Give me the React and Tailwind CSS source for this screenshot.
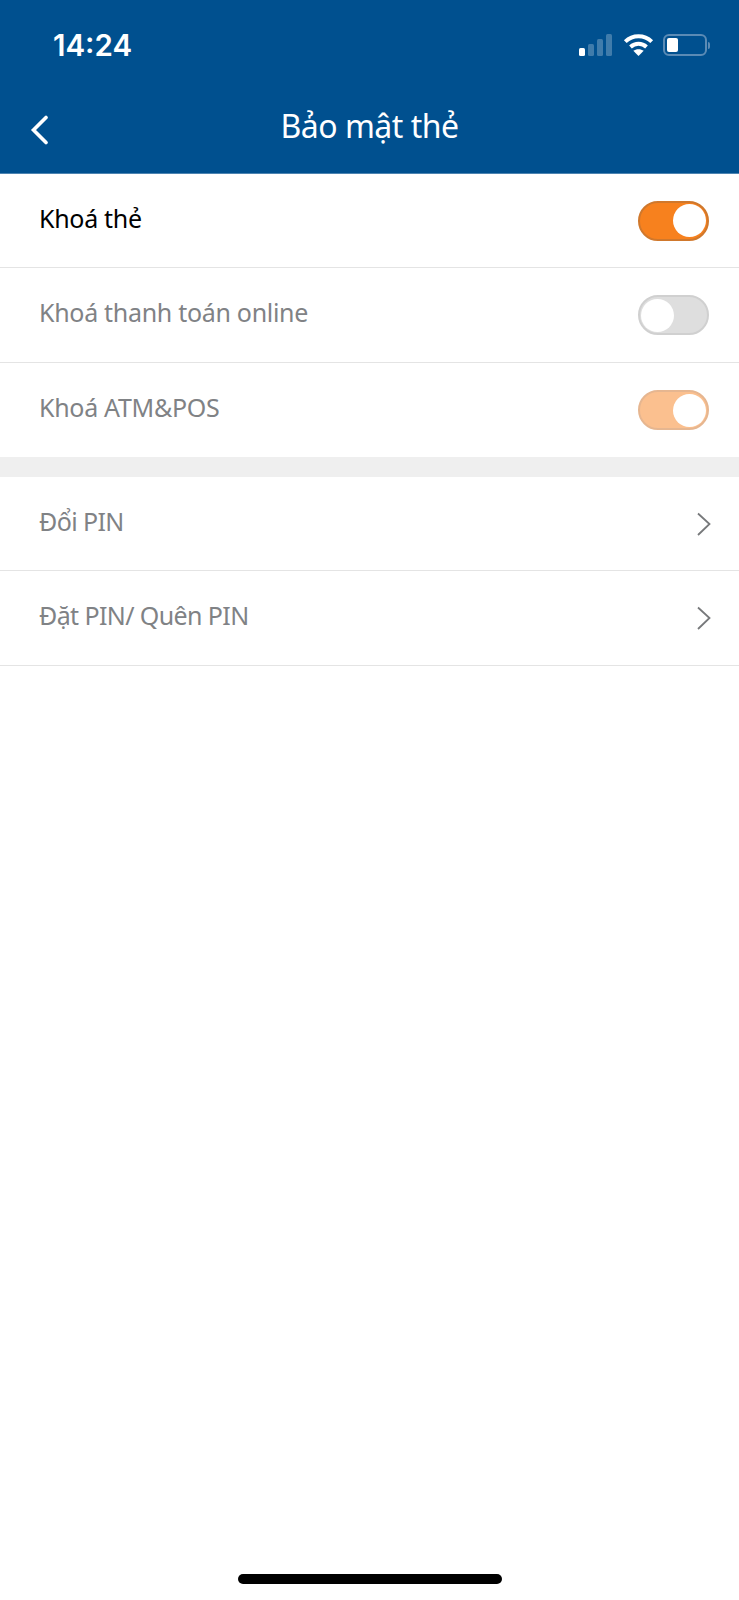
const FONT = "font-['Noto_Sans',sans-serif]";

function SignalIcon() {
  return (
    <svg width="35" height="22" viewBox="0 0 35 22" fill="white">
      <rect x="0" y="14" width="6" height="8" rx="1.5" />
      <rect x="9" y="10" width="6" height="12" rx="1.5" opacity="0.25" />
      <rect x="18" y="5" width="6" height="17" rx="1.5" opacity="0.25" />
      <rect x="27" y="0" width="6" height="22" rx="1.5" opacity="0.25" />
    </svg>
  );
}

function WifiIcon() {
  return (
    <svg width="31" height="22" viewBox="0 0 30 22" fill="none" stroke="white" strokeWidth="4">
      <path d="M1.8 7.6C9.2 0.6 20.8 0.6 28.2 7.6" />
      <path d="M7 13C11.6 8.8 18.4 8.8 23 13" />
      <path d="M15 22L9.8 16.8C12.6 14.6 17.4 14.6 20.2 16.8Z" fill="white" stroke="none" />
    </svg>
  );
}

function BatteryIcon() {
  return (
    <div className="flex items-center">
      <div className="w-[44px] h-[22px] rounded-[6px] border-2 border-[#5b8bb5] p-[2px] flex">
        <div className="w-[11px] h-full rounded-[2px] bg-white" />
      </div>
      <div className="w-[2px] h-[7px] ml-[1px] rounded-r-sm bg-[#5b8bb5]" />
    </div>
  );
}

function Toggle({ on, dim }) {
  let track = "bg-[#dedede] border-[#d0d0d0]";
  if (on) track = dim ? "bg-[#fbc08f] border-[#e6b690]" : "bg-[#f7811e] border-[#d0782c]";
  return (
    <div className={`w-[71px] h-[40px] rounded-full border-2 flex items-center px-[1px] ${track} ${on ? "justify-end" : "justify-start"}`}>
      <div className="w-[33px] h-[33px] rounded-full bg-white" />
    </div>
  );
}

function Chevron() {
  return (
    <svg width="16" height="24" viewBox="0 0 16 24" fill="none" stroke="#77797b" strokeWidth="1.8">
      <path d="M2 1.5L13.5 12L2 23" />
    </svg>
  );
}

function Row({ label, dark, short, tight, border = true, children }) {
  return (
    <div className={`${short ? "h-[94px]" : "h-[95px]"} pl-[39px] flex items-center justify-between border-b ${border ? "border-[#e4e4e4]" : "border-transparent"}`}>
      <span className={`text-[25px] pb-[4px] ${tight ? "tracking-[-0.6px]" : "tracking-[-0.3px]"} ${dark ? "text-black" : "text-[#808285]"}`}>{label}</span>
      {children}
    </div>
  );
}

export default function App() {
  return (
    <div className={`relative w-[739px] h-[1600px] bg-white overflow-hidden ${FONT}`}>
      <header className="h-[174px] bg-[#00508f] border-b border-[#4d84b1] text-white">
        <div className="h-[90px] pl-[53px] pr-[29px] flex items-center justify-between">
          <span className="text-[29.5px] font-semibold font-['Inter',sans-serif]">14:24</span>
          <div className="flex items-center gap-[9px]">
            <SignalIcon />
            <WifiIcon />
            <BatteryIcon />
          </div>
        </div>
        <div className="relative flex justify-center pt-[8px]">
          <span className="text-[32px] tracking-[-0.5px] leading-[56px]">Bảo mật thẻ</span>
          <svg className="absolute left-[30px] top-[25px]" width="20" height="30" viewBox="0 0 20 30" fill="none" stroke="white" strokeWidth="3.6" strokeLinecap="round">
            <path d="M16 2.5L3.5 15L16 27.5" />
          </svg>
        </div>
      </header>

      <Row label="Khoá thẻ" dark short>
        <div className="pr-[30px]"><Toggle on /></div>
      </Row>
      <Row label="Khoá thanh toán online">
        <div className="pr-[30px]"><Toggle /></div>
      </Row>
      <Row label="Khoá ATM&POS" border={false}>
        <div className="pr-[30px]"><Toggle on dim /></div>
      </Row>

      <div className="h-[20px] bg-[#efefef] -mt-[1px]" />

      <Row label="Đổi PIN" short tight>
        <div className="pr-[27px]"><Chevron /></div>
      </Row>
      <Row label="Đặt PIN/ Quên PIN" tight>
        <div className="pr-[27px]"><Chevron /></div>
      </Row>

      <div className="absolute left-[238px] bottom-[16px] w-[264px] h-[10px] rounded-full bg-black" />
    </div>
  );
}
